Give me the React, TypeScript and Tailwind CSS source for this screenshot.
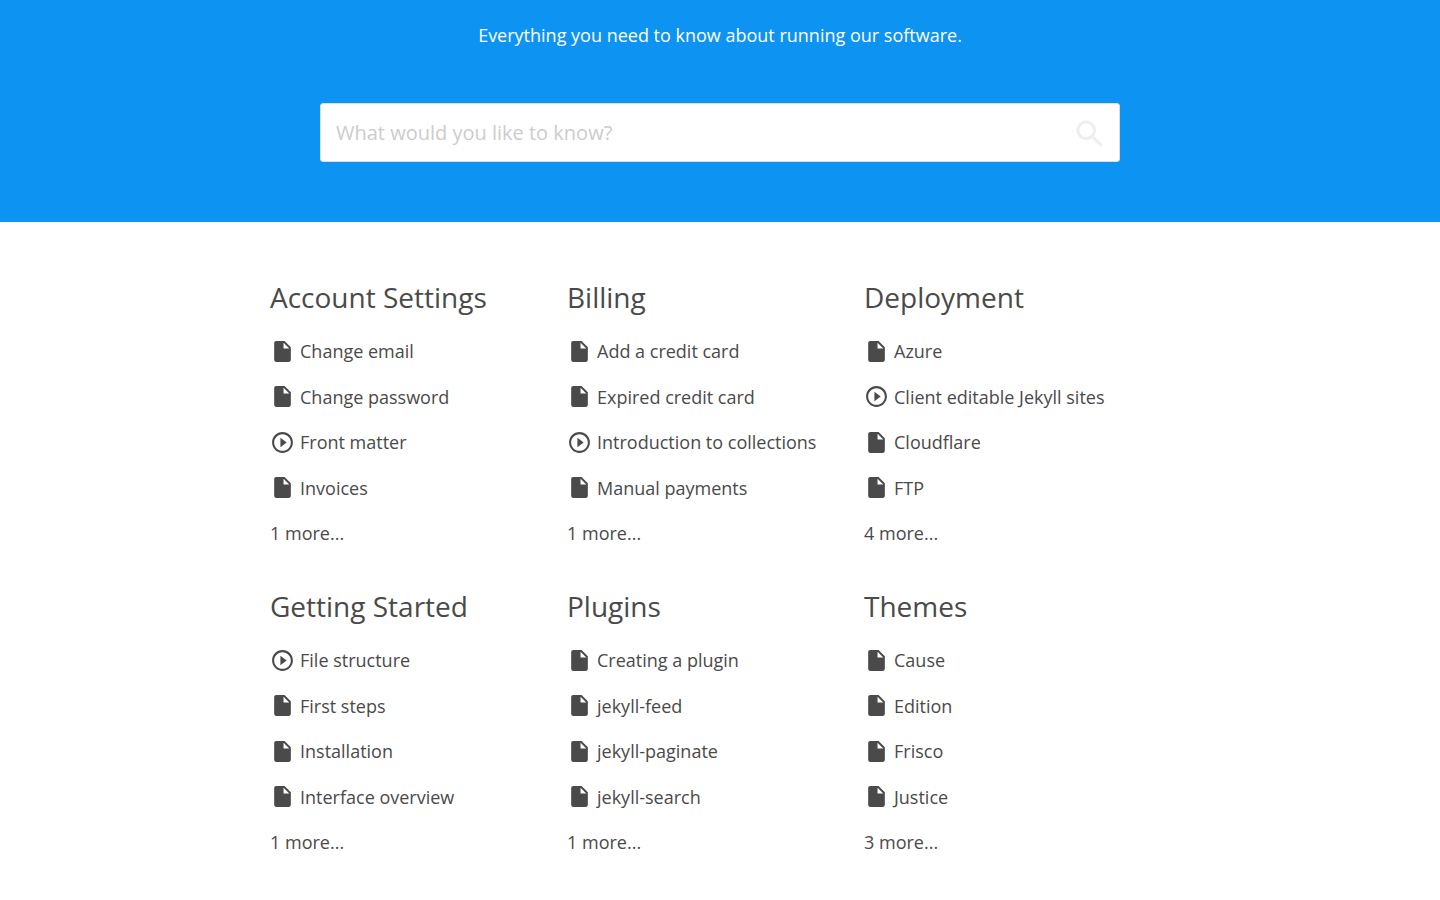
type Item = { title: string; video?: boolean };
type Category = { title: string; items: Item[]; more: number };

const categories: Category[] = [
  {
    title: "Account Settings",
    items: [{ title: "Change email" }, { title: "Change password" }, { title: "Front matter", video: true }, { title: "Invoices" }],
    more: 1,
  },
  {
    title: "Billing",
    items: [
      { title: "Add a credit card" },
      { title: "Expired credit card" },
      { title: "Introduction to collections", video: true },
      { title: "Manual payments" },
    ],
    more: 1,
  },
  {
    title: "Deployment",
    items: [{ title: "Azure" }, { title: "Client editable Jekyll sites", video: true }, { title: "Cloudflare" }, { title: "FTP" }],
    more: 4,
  },
  {
    title: "Getting Started",
    items: [{ title: "File structure", video: true }, { title: "First steps" }, { title: "Installation" }, { title: "Interface overview" }],
    more: 1,
  },
  {
    title: "Plugins",
    items: [{ title: "Creating a plugin" }, { title: "jekyll-feed" }, { title: "jekyll-paginate" }, { title: "jekyll-search" }],
    more: 1,
  },
  {
    title: "Themes",
    items: [{ title: "Cause" }, { title: "Edition" }, { title: "Frisco" }, { title: "Justice" }],
    more: 3,
  },
];

function FileIcon() {
  return (
    <svg viewBox="0 0 24 24" className="size-[25px] shrink-0 fill-current" aria-hidden="true">
      <path d="M6 2c-1.1 0-1.99.9-1.99 2L4 20c0 1.1.89 2 1.99 2H18c1.1 0 2-.9 2-2V8l-6-6H6zm7 7V3.5L18.5 9H13z" />
    </svg>
  );
}

function PlayIcon() {
  return (
    <svg viewBox="0 0 24 24" className="size-[25px] shrink-0 fill-current" aria-hidden="true">
      <path d="M10 16.5l6-4.5-6-4.5v9zM12 2C6.48 2 2 6.48 2 12s4.48 10 10 10 10-4.48 10-10S17.52 2 12 2zm0 18c-4.41 0-8-3.59-8-8s3.59-8 8-8 8 3.59 8 8-3.59 8-8 8z" />
    </svg>
  );
}

function SearchIcon() {
  return (
    <svg viewBox="0 0 24 24" className="size-9 fill-current" aria-hidden="true">
      <path d="M15.5 14h-.79l-.28-.27C15.41 12.59 16 11.11 16 9.5 16 5.91 13.09 3 9.5 3S3 5.91 3 9.5 5.91 16 9.5 16c1.61 0 3.09-.59 4.23-1.57l.27.28v.79l5 4.99L20.49 19l-4.99-5zm-6 0C7.01 14 5 11.99 5 9.5S7.01 5 9.5 5 14 7.01 14 9.5 11.99 14 9.5 14z" />
    </svg>
  );
}

export default function App() {
  return (
    <div className="min-h-screen bg-white font-['Open_Sans',sans-serif] text-lg text-[#4a4a4a]">
      <header className="bg-[#0d93f2] px-5 pt-5 pb-[60px]">
        <p className="text-center leading-[30px] text-white">Everything you need to know about running our software.</p>
        <form className="relative mx-auto mt-[53px] max-w-[800px]" onSubmit={(e) => e.preventDefault()}>
          <input
            type="search"
            aria-label="Search"
            placeholder="What would you like to know?"
            className="block h-[59px] w-full rounded-[3px] border border-[#ddd] bg-white pr-14 pl-[15px] text-xl text-[#4a4a4a] outline-none placeholder:text-[#ccc]"
          />
          <button type="submit" aria-label="Submit search" className="absolute top-[13px] right-3 text-[#eee]">
            <SearchIcon />
          </button>
        </form>
      </header>
      <main className="mx-auto grid max-w-[900px] grid-cols-3 gap-y-9 pt-[53px] pr-[9px] pb-10">
        {categories.map((category) => (
          <section key={category.title}>
            <h2 className="mb-[17px] text-[28px] leading-[44px]">
              <a href="#">{category.title}</a>
            </h2>
            <ul className="flex min-h-[212px] flex-col justify-between">
              {category.items.map((item) => (
                <li key={item.title}>
                  <a href="#" className="flex h-[30px] items-center gap-[5px] whitespace-nowrap">
                    {item.video ? <PlayIcon /> : <FileIcon />}
                    {item.title}
                  </a>
                </li>
              ))}
              <li>
                <a href="#" className="flex h-[30px] items-center">{category.more} more...</a>
              </li>
            </ul>
          </section>
        ))}
      </main>
    </div>
  );
}
